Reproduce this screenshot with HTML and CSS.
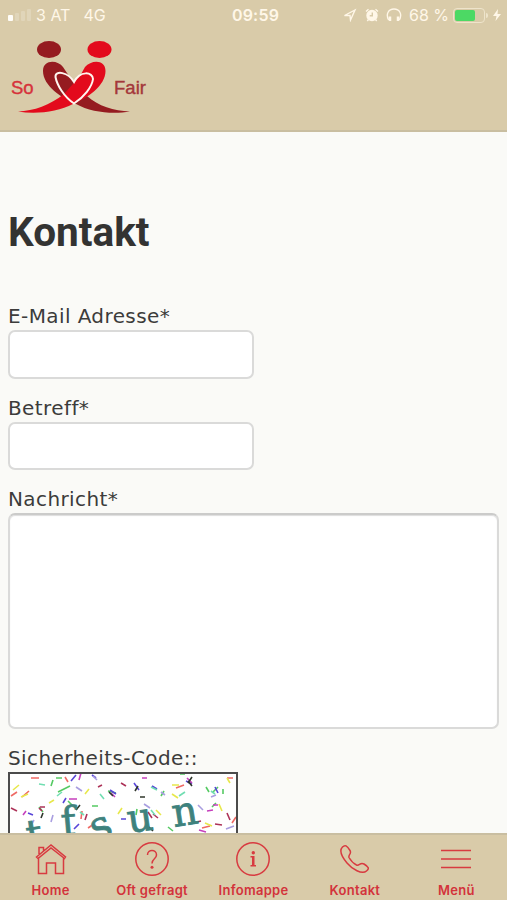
FILE: index.html
```html
<!DOCTYPE html>
<html lang="de">
  <head>
    <meta charset="UTF-8" />
    <meta name="viewport" content="width=device-width, initial-scale=1" />
    <title>So Fair - Kontakt</title>
    <link rel="stylesheet" href="styles.css">
  </head>
  <body>
    <header>
      <div class="status-bar">
        <div class="carrier">
          <span class="signal"><i class="on"></i><i></i><i></i><i></i></span>
          <span class="provider">3 AT</span>
          <span>4G</span>
        </div>
        <div class="clock">09:59</div>
        <div class="indicators">
          <svg class="location" width="14" height="14" viewBox="0 0 14 14"><path d="M1.5 7.500 12 2 7.500 12 7 7.500Z" /></svg>
          <svg class="alarm" width="14" height="14" viewBox="0 0 14 14">
            <circle cx="7" cy="7.500" r="5" />
            <path class="ears" d="M1 3.500 3.500 1.300M13 3.500 10.500 1.300M3.500 11.500 2.300 13M10.500 11.500 11.700 13" />
            <path class="hands" d="M7.300 4.500V7.800H4.700" />
          </svg>
          <svg class="headphones" width="16" height="14" viewBox="0 0 16 14">
            <path d="M2.600 12C-.5 6 2.500 1 8 1S16.500 6 13.400 12" />
            <path class="pads" d="M4 8.500V13M12 8.500V13" />
          </svg>
          <span class="percent">68 %</span>
          <span class="battery"><span class="level"></span></span>
          <svg class="bolt" width="8" height="12" viewBox="0 0 8 12"><path d="M5 0 0 7H3.500L2.500 12 8 5H4.500Z" /></svg>
        </div>
      </div>
      <svg class="logo" width="150" height="80" viewBox="0 0 150 80">
        <ellipse class="dark" cx="49" cy="13.500" rx="12" ry="8.500" />
        <ellipse class="red" cx="99.500" cy="13.500" rx="12" ry="8.500" />
        <path class="dark" d="M43 35C43 23 58 24 63 31L69 40L87 60C98 70 114 75 130 75.500C113 78.500 91 76.500 76 68C62 62 43 50 43 35Z" />
        <path class="red" d="M105.500 35C105.500 23 91 24 85 31L80 40L64 58C50 69 34 75 18 75.500C36 78.500 58 76 73 68C87 62 105.500 50 105.500 35Z" />
        <path class="heart" d="M74 67.500C64 61 57 49 55.500 41C55 34 68 36 74 46C80 34 93 36 93 43C92 51 84 61 74 67.500Z" />
        <text class="so" x="11" y="58" textLength="22.500">So</text>
        <text class="fair" x="114" y="58" textLength="32">Fair</text>
      </svg>
    </header>

    <main>
      <h1>Kontakt</h1>
      <form>
        <div class="field">
          <label for="email">E-Mail Adresse*</label>
          <input type="email" id="email" />
        </div>
        <div class="field">
          <label for="subject">Betreff*</label>
          <input type="text" id="subject" />
        </div>
        <div class="field">
          <label for="message">Nachricht*</label>
          <textarea id="message"></textarea>
        </div>
        <div class="field">
          <label class="code-label">Sicherheits-Code::</label>
          <svg class="captcha" width="230" height="80" viewBox="2 2 226 76">
            <path stroke="#ef6964" d="M23 6h8M57 5l3 5M14 25l7-6M3 24l6-4M219 6h6M168 16l8-3M194 56l8-2M73 47l1-8M224 51l4-6M80 56l6-4M51 70l5 5" />
            <path stroke="#55ca63" d="M48 6h6M172 2h5M45 8l-2 6M50 20l12-6M198 15l3 5M205 20l5-5M153 24l3-5M84 34h6M128 43l1-6M100 19l8 2M60 29l5 5M215 17v5M31 35l4 5M160 55l5 4M208 31l-4 4" />
            <path stroke="#5946d8" d="M63 9l5-6M55 31l3-5M131 18l-5-7M178 9l6 3M102 18l6 4M66 57l5-5M144 14l5 3M20 41l5 2M113 47h5M207 15l3 6M84 3l4 3" />
            <path stroke="#c640bd" d="M71 8l2-7M61 27h8M179 6l5 5M205 33h5M134 6h5M103 21l4 4M15 43l3-4M199 39l6-1M191 58l7 2" />
            <path stroke="#e8e84c" d="M5 18l6-5M164 13h7M77 22l4-5M13 25l7-3M110 42l4-6M219 6l3 5M41 31l5-3M211 32l3 7M148 38l5 5M197 51l7 3M164 22l6 4" />
            <path stroke="#30372d" d="M127 19l3-5M184 5l-4 6M105 24l-4-4M68 38l4-5M33 46l2-5M180 9l4 5M132 25h5M141 55l4 4" />
            <path stroke="#ad3359" d="M113 11l5 3M32 35h5M150 46l-5-4M207 52l7 1M3 36l6 3M79 42l-2 6M31 36l3 3M140 40l4 6M185 51l8-2M219 41l3 7M90 15l4-2" />
            <path stroke="#a99ee0" d="M68 15l6 4M153 20l4 3M85 4l4 4M203 25l5-2M136 32l6 4M22 55l4-7M43 50l2-7M218 57l8-3M190 33l5 5" />
            <path stroke="#71deb2" d="M49 24l5-4M143 15l6 3M96 27l-4-5M203 19l4 3M143 38l4 5M72 40l4 3M37 13l-6-1M171 24l6-4" />
            <g class="letters">
              <text transform="translate(20 77) rotate(-8)">t</text>
              <text transform="translate(54 64) rotate(-5)">f</text>
              <text transform="translate(88 70) rotate(-23)">s</text>
              <text transform="translate(121 61) rotate(-8)">u</text>
              <text transform="translate(166 55) rotate(-9)">n</text>
            </g>
          </svg>
        </div>
      </form>
    </main>

    <nav>
      <a href="#">
        <svg width="34" height="34" viewBox="0 0 34 34"><path d="M2.500 15 4 16.500 17 6 30.500 16.500 31.500 15 17 3ZM4.500 16.500V31.500H12.500V21H21.500V31.500H29.500V16M5 12V5.500H9.500V8.500" /></svg>
        <span>Home</span>
      </a>
      <a href="#">
        <svg width="34" height="34" viewBox="0 0 34 34"><circle cx="17" cy="17" r="16.200" /><path d="M12.500 13C12.500 7 21.500 7 21.500 13C21.500 17 17 16.500 17 21.500" /><circle class="dot" cx="17" cy="25.300" r="1.500" /></svg>
        <span>Oft gefragt</span>
      </a>
      <a href="#">
        <svg width="34" height="34" viewBox="0 0 34 34"><circle cx="17" cy="17" r="16.200" /><path class="dot" d="M14.500 14H18.500V23H20V24.500H14.500V23H16V15.500H14.500Z" /><circle class="dot" cx="17.300" cy="10.800" r="1.700" /></svg>
        <span>Infomappe</span>
      </a>
      <a href="#">
        <svg width="34" height="34" viewBox="0 0 34 34"><path d="M4.500 5C7 2.500 9 3.500 12 8.500C14 12 10 12.500 11 15.500C13 19 15.500 21.500 18.500 23C21.500 24 22 20 26 22C31 25 31.500 26.500 28.500 29C24 33 14 27 9 21C4 15 1 8.500 4.500 5Z" /></svg>
        <span>Kontakt</span>
      </a>
      <a href="#">
        <svg width="34" height="34" viewBox="0 0 34 34"><path d="M2 8.500H32M2 17H32M2 25.500H32" /></svg>
        <span>Menü</span>
      </a>
    </nav>
  </body>
</html>
```
FILE: styles.css
```css
* {
  box-sizing: border-box;
}
body {
  margin: 0;
  height: 900px;
  display: flex;
  flex-direction: column;
  overflow: hidden;
  background: #fafaf7;
  color: #3c3c3b;
  font-family: Verdana, "DejaVu Sans", sans-serif;
}
header {
  height: 132px;
  flex: none;
  background: #d9cba9;
  border-bottom: 2px solid #c9bea1;
}

/* Status bar */
.status-bar {
  height: 30px;
  display: grid;
  grid-template-columns: 1fr auto 1fr;
  align-items: center;
  padding: 0 6px 0 8px;
  color: #fff7e8;
  font-family: Inter, sans-serif;
  font-size: 16px;
}
.carrier,
.indicators {
  display: flex;
  align-items: center;
}
.provider {
  margin: 0 13px 0 5px;
}
.signal {
  display: flex;
  align-items: flex-end;
  gap: 2px;

  i {
    width: 4px;
    height: 8px;
    border-radius: 1px;
    background: #e0d5b9;
  }
  i:nth-child(3) {
    height: 10px;
  }
  i:nth-child(4) {
    height: 12px;
  }
  i.on {
    width: 5px;
    height: 6px;
    background: #fffdf8;
  }
}
.clock {
  margin-left: 2px;
  font-weight: 600;
  font-size: 16px;
  letter-spacing: 0.2px;
}
.indicators {
  justify-content: flex-end;

  svg {
    fill: none;
    stroke: #fff7e8;
    stroke-width: 1.4;
  }
  .location {
    margin-right: 1px;
  }
  .alarm {
    margin: 0 7px;
    fill: #fff7e8;
  }
  .hands {
    fill: none;
    stroke: #d9cba9;
  }
  .pads {
    stroke-width: 2.5;
  }
  .bolt {
    fill: #fff7e8;
    stroke: none;
  }
}
.percent {
  margin: 0 4px 0 7px;
}
.battery {
  position: relative;
  width: 32px;
  height: 15px;
  margin-right: 8px;
  padding: 1px;
  border: 1px solid #eee4cb;
  border-radius: 4px;

  &::after {
    content: "";
    position: absolute;
    right: -4px;
    top: 4px;
    width: 2px;
    height: 5px;
    border-radius: 0 2px 2px 0;
    background: #eee4cb;
  }
}
.level {
  display: block;
  width: 20px;
  height: 11px;
  border-radius: 2px;
  background: #4cd964;
}

.logo {
  display: block;
  margin-top: 5.5px;

  .dark {
    fill: #951b20;
  }
  .red {
    fill: #e30a1c;
  }
  .heart {
    fill: none;
    stroke: #fff5ef;
    stroke-width: 2;
  }
  text {
    font-family: "Liberation Sans", Arial, sans-serif;
    font-size: 18.5px;
    stroke-width: 0.4;
  }
  .so {
    fill: #d6323b;
    stroke: #d6323b;
  }
  .fair {
    fill: #a4373a;
    stroke: #a4373a;
  }
}

main {
  flex: 1;
  min-height: 0;
  overflow: hidden;
  padding: 76px 8px 0;
}
h1 {
  margin: 0 0 48px;
  font-family: Roboto, sans-serif;
  font-size: 40.5px;
  line-height: 48px;
  color: #333332;
}
.field {
  margin-bottom: 17px;
}
label {
  display: block;
  height: 26px;
  line-height: 24px;
  font-size: 20px;
  letter-spacing: 0.4px;
}
input,
textarea {
  display: block;
  height: 48.5px;
  width: 246px;
  border: 2px solid #dadad9;
  border-radius: 7px;
  background: #fff;
}
textarea {
  width: 100%;
  height: 216px;
  resize: none;
  border-top-color: #cbcbca;
  box-shadow: inset 0 1px 1px #ddd;
}
.captcha {
  display: block;
  border: 2px solid #4b4b4b;
  background: #fff;
  fill: none;
  stroke-width: 1.6;
}
.letters {
  fill: #3e827d;
  stroke: #3e827d;
  stroke-width: 0.8;
  font-family: "DejaVu Serif", serif;
  font-size: 40px;
}

/* Bottom navigation */
nav {
  height: 67px;
  flex: none;
  display: grid;
  grid-template-columns: repeat(5, 1fr);
  border-top: 2px solid #c9bea1;
  background: #d9cba9;

  a {
    display: flex;
    flex-direction: column;
    align-items: center;
    padding-top: 7px;
    color: #d3333b;
    text-decoration: none;
    font-family: Inter, sans-serif;
    font-size: 13px;
    font-weight: 600;
    line-height: 16px;
    letter-spacing: 0.3px;
  }
  span {
    margin-top: 6px;
  }
  svg {
    fill: none;
    stroke: #d83a40;
    stroke-width: 1.5;
  }
  .dot {
    fill: #d83a40;
    stroke: none;
  }
}
```
